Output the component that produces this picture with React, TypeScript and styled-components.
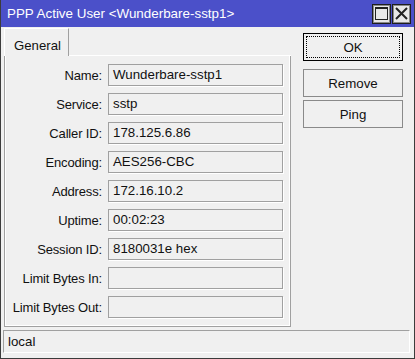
import React from 'react'
import styled, { createGlobalStyle } from 'styled-components'

const GlobalStyle = createGlobalStyle`
	html, body {
		margin: 0;
		padding: 0;
		background: #f0f0f0;
	}
	body {
		font-family: "Liberation Sans", Arial, sans-serif;
		font-size: 13px;
		color: #111111;
	}
`

const fields: { label: string; value: string }[] = [
	{ label: 'Name:', value: 'Wunderbare-sstp1' },
	{ label: 'Service:', value: 'sstp' },
	{ label: 'Caller ID:', value: '178.125.6.86' },
	{ label: 'Encoding:', value: 'AES256-CBC' },
	{ label: 'Address:', value: '172.16.10.2' },
	{ label: 'Uptime:', value: '00:02:23' },
	{ label: 'Session ID:', value: '8180031e hex' },
	{ label: 'Limit Bytes In:', value: '' },
	{ label: 'Limit Bytes Out:', value: '' },
]

function App() {
	return (
		<>
			<GlobalStyle />
			<Window>
				<TitleBar>
					<Title>PPP Active User &lt;Wunderbare-sstp1&gt;</Title>
					<TitleButtons>
						<TitleButton aria-label="maximize">
							<svg width="13" height="13" viewBox="0 0 13 13">
								<rect x="0.5" y="0.5" width="12" height="12" fill="none" stroke="#222" strokeWidth="1" />
								<line x1="0" y1="1.5" x2="13" y2="1.5" stroke="#222" strokeWidth="1" />
							</svg>
						</TitleButton>
						<TitleButton aria-label="close">
							<svg width="13" height="13" viewBox="0 0 13 13">
								<path d="M1 1 L12 12 M12 1 L1 12" stroke="#222" strokeWidth="2" />
							</svg>
						</TitleButton>
					</TitleButtons>
				</TitleBar>

				<Body>
					<TabArea>
						<TabStrip>
							<Tab>General</Tab>
							<TabFiller />
						</TabStrip>
						<Panel>
							{fields.map(f => (
								<FieldRow key={f.label}>
									<Label>{f.label}</Label>
									<Field>{f.value}</Field>
								</FieldRow>
							))}
						</Panel>
					</TabArea>

					<ButtonColumn>
						<Button $focused>OK</Button>
						<Button $spaced>Remove</Button>
						<Button>Ping</Button>
					</ButtonColumn>
				</Body>

				<StatusBar>local</StatusBar>
			</Window>
		</>
	)
}

export default App

//#region styles
const Window = styled.div`
	display: flex;
	flex-direction: column;
	box-sizing: border-box;
	width: 415px;
	height: 359px;
	border-left: 1px solid #3c3c3c;
	border-right: 1px solid #3c3c3c;
	border-bottom: 1px solid #3c3c3c;
	background: #f0f0f0;
	overflow: hidden;
`

const TitleBar = styled.div`
	display: flex;
	align-items: center;
	justify-content: space-between;
	height: 27px;
	margin: 0 -1px;
	padding: 0 4px 0 7px;
	background: #4b50c9;
	color: #ffffff;
	flex-shrink: 0;
`

const Title = styled.span`
	font-size: 13.4px;
	white-space: nowrap;
`

const TitleButtons = styled.div`
	display: flex;
	gap: 1px;
`

const TitleButton = styled.div`
	display: flex;
	align-items: center;
	justify-content: center;
	box-sizing: border-box;
	width: 19px;
	height: 20px;
	border: 1px solid #1e1e1e;
	box-shadow: inset 1px 1px 0 #8a8a8a, inset -1px -1px 0 #8a8a8a;
	background: #e8e8e8;
`

const Body = styled.div`
	display: flex;
	flex: 1;
	padding: 1px 0 0 3px;
`

const TabArea = styled.div`
	display: flex;
	flex-direction: column;
	width: 287px;
`

const TabStrip = styled.div`
	display: flex;
	height: 28px;
`

const Tab = styled.div`
	box-sizing: border-box;
	width: 65px;
	padding: 9px 0 0 9px;
	border-left: 1px solid #ffffff;
	border-top: 1px solid #ffffff;
	border-right: 1px solid #a0a0a0;
	font-size: 13.2px;
`

const TabFiller = styled.div`
	flex: 1;
	border-bottom: 1px solid #ffffff;
`

const Panel = styled.div`
	display: flex;
	flex-direction: column;
	gap: 7px;
	box-sizing: border-box;
	height: 271px;
	padding: 8px 0 0 0;
	border-left: 1px solid #a0a0a0;
	border-right: 1px solid #a0a0a0;
	border-bottom: 1px solid #a0a0a0;
	box-shadow: inset 1px 0 0 #ffffff, inset -1px 0 0 #ffffff, inset 0 -1px 0 #ffffff;
`

const FieldRow = styled.div`
	display: grid;
	grid-template-columns: 97px 175px;
	column-gap: 6px;
	align-items: center;
	height: 22px;
`

const Label = styled.span`
	text-align: right;
	white-space: nowrap;
	letter-spacing: -0.15px;
`

const Field = styled.div`
	box-sizing: border-box;
	height: 22px;
	padding: 0 0 0 4px;
	line-height: 20px;
	font-size: 13.3px;
	border: 1px solid #a0a0a0;
	box-shadow: 1px 1px 0 #ffffff;
	white-space: nowrap;
`

const ButtonColumn = styled.div`
	display: flex;
	flex-direction: column;
	gap: 3px;
	padding: 5px 0 0 12px;
`

const Button = styled.div<{ $focused?: boolean; $spaced?: boolean }>`
	position: relative;
	display: flex;
	align-items: center;
	justify-content: center;
	box-sizing: border-box;
	width: 100px;
	height: 28px;
	margin-top: ${p => (p.$spaced ? '5px' : '0')};
	border: 1px solid ${p => (p.$focused ? '#000000' : '#8a8a8a')};
	background: #f0f0f0;
	font-size: 13.3px;

	&::after {
		content: "";
		display: ${p => (p.$focused ? 'block' : 'none')};
		position: absolute;
		inset: 2px;
		border: 1px dotted #000000;
	}
`

const StatusBar = styled.div`
	display: flex;
	align-items: center;
	box-sizing: border-box;
	height: 23px;
	margin: 0 4px 5px 2px;
	padding-left: 4px;
	border-top: 1px solid #a0a0a0;
	border-left: 1px solid #a0a0a0;
	border-bottom: 1px solid #ffffff;
	border-right: 1px solid #ffffff;
	font-size: 13.3px;
`
//#endregion
